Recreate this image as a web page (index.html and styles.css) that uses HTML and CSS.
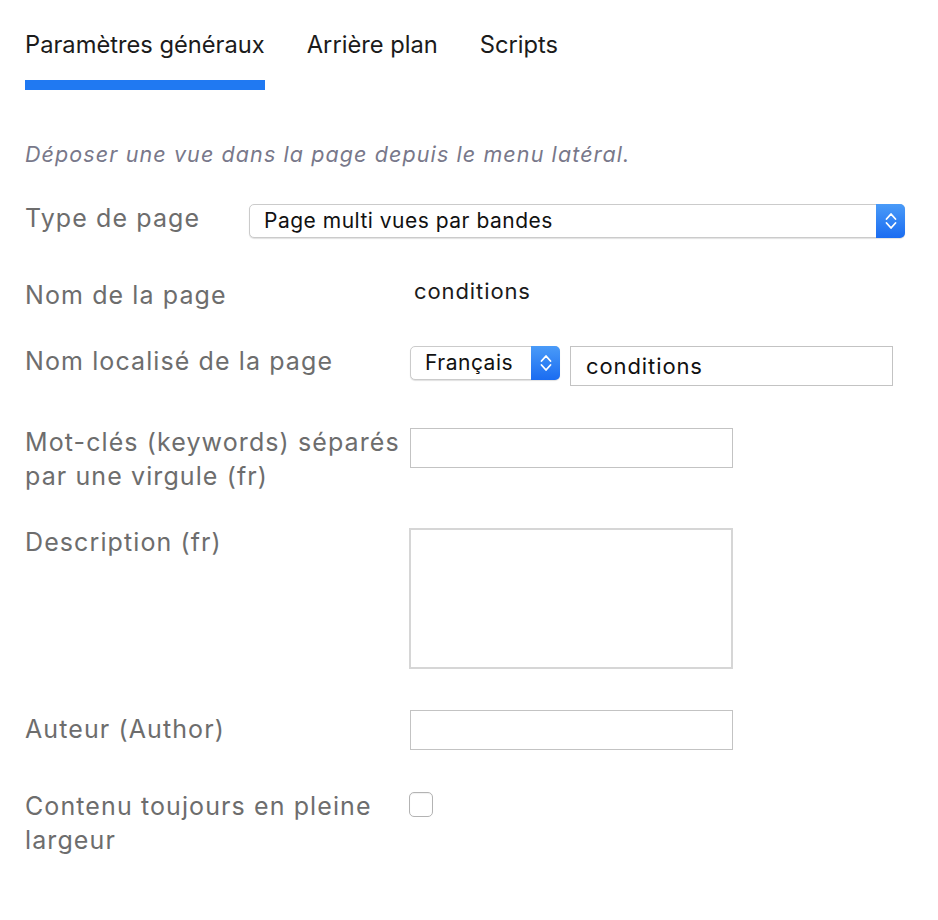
FILE: index.html
```html
<!DOCTYPE html>
<html lang="fr">
<head>
<meta charset="utf-8">
<title>Paramètres de la page</title>
<link rel="stylesheet" href="styles.css">
</head>
<body>
<div class="page">
  <nav class="tabs">
    <a class="tab tab-active">Paramètres généraux</a>
    <a class="tab">Arrière plan</a>
    <a class="tab">Scripts</a>
  </nav>

  <p class="hint">Déposer une vue dans la page depuis le menu latéral.</p>

  <div class="form">
    <div class="row">
      <label class="label label-narrow">Type de page</label>
      <div class="select select-wide field">
        <span class="select-value">Page multi vues par bandes</span>
        <span class="select-btn">
          <svg width="12" height="20" viewBox="0 0 12 20"><polyline points="1.5,8 6,3 10.5,8" /><polyline points="1.5,12 6,17 10.5,12" /></svg>
        </span>
      </div>
    </div>

    <div class="row">
      <label class="label">Nom de la page</label>
      <span class="value">conditions</span>
    </div>

    <div class="row">
      <label class="label">Nom localisé de la page</label>
      <div class="group field field-tight">
        <div class="select select-lang">
          <span class="select-value">Français</span>
          <span class="select-btn">
            <svg width="12" height="20" viewBox="0 0 12 20"><polyline points="1.5,8 6,3 10.5,8" /><polyline points="1.5,12 6,17 10.5,12" /></svg>
          </span>
        </div>
        <input class="input input-long" type="text" value="conditions">
      </div>
    </div>

    <div class="row">
      <label class="label">Mot-clés (keywords) séparés par une virgule (fr)</label>
      <input class="input field" type="text">
    </div>

    <div class="row">
      <label class="label">Description (fr)</label>
      <textarea class="textarea field"></textarea>
    </div>

    <div class="row">
      <label class="label label-low">Auteur (Author)</label>
      <input class="input field field-up" type="text">
    </div>

    <div class="row">
      <label class="label">Contenu toujours en pleine largeur</label>
      <input class="check field" type="checkbox">
    </div>
  </div>
</div>
</body>
</html>
```

FILE: styles.css
```css
* {
  box-sizing: border-box;
}

html, body {
  margin: 0;
  background: #ffffff;
}

body {
  font-family: Inter, "Liberation Sans", Arial, sans-serif;
  color: #1b1b1b;
}

.page {
  padding: 0 25px;
}

/* Tabs */
.tabs {
  display: flex;
  gap: 42px;
}

.tab {
  display: block;
  padding-top: 30px;
  padding-bottom: 20px;
  border-bottom: 10px solid transparent;
  font-size: 23.7px;
  line-height: 30px;
  color: #1b1b1b;
}

.tab-active {
  border-bottom-color: #2079f2;
}

/* Hint */
.hint {
  margin: 50px 0 0;
  font-size: 21.5px;
  line-height: 28px;
  font-style: italic;
  color: #78788a;
  letter-spacing: 1.1px;
}

/* Form */
.form {
  display: flex;
  flex-direction: column;
  gap: 32px;
  margin-top: 33px;
}

.row {
  display: flex;
  align-items: flex-start;
}

.label {
  flex: 0 0 385px;
  font-size: 25px;
  line-height: 34px;
  color: #6d6d6d;
  letter-spacing: 1.1px;
}

.label-narrow {
  flex-basis: 224px;
}

.label-low {
  padding-top: 1px;
}

.field {
  margin-top: 3px;
  margin-bottom: 7px;
}

.field-tight {
  margin-top: 2px;
}

.field-up {
  margin-top: -1px;
}

.value {
  margin-top: -1.5px;
  padding-left: 4px;
  font-size: 22px;
  line-height: 28px;
  color: #1b1b1b;
  letter-spacing: 0.9px;
}

/* Select */
.select {
  display: flex;
  height: 34px;
  background: #ffffff;
  border: 1px solid #cbcbcb;
  border-radius: 5px;
  box-shadow: 0 1px 1px rgba(0, 0, 0, 0.12);
}

.select-wide {
  width: 656px;
  margin-bottom: 8px;
}

.select-lang {
  width: 150px;
}

.select-value {
  flex: 1;
  padding-left: 14px;
  font-size: 21px;
  line-height: 32px;
  color: #111111;
  letter-spacing: 0.5px;
  white-space: nowrap;
}

.select-btn {
  display: flex;
  align-items: center;
  justify-content: center;
  width: 29px;
  margin: -1px -1px -1px 0;
  border-radius: 0 5px 5px 0;
  background: linear-gradient(#4a9bf8, #1a6cf1);
}

.select-btn svg polyline {
  fill: none;
  stroke: #ffffff;
  stroke-width: 1.8;
  stroke-linecap: round;
  stroke-linejoin: round;
}

/* Inputs */
.group {
  display: flex;
  gap: 10px;
}

.input {
  display: block;
  width: 323px;
  height: 40px;
  padding: 0 15px;
  border: 1px solid #c3c3c3;
  border-radius: 0;
  background: #ffffff;
  font-family: inherit;
  font-size: 22px;
  line-height: 38px;
  color: #111111;
  letter-spacing: 0.9px;
  outline: none;
}

.textarea {
  display: block;
  width: 324px;
  height: 141px;
  margin-left: -1px;
  margin-bottom: 10px;
  border: 2px solid #d6d6d6;
  resize: none;
  background: #ffffff;
  outline: none;
}

.check {
  appearance: none;
  -webkit-appearance: none;
  display: block;
  width: 24px;
  height: 25px;
  margin-left: -1px;
  border: 1.5px solid #b3b3b3;
  border-radius: 5px;
  background: #ffffff;
  box-shadow: inset 0 1px 1px rgba(0, 0, 0, 0.06);
}
```
